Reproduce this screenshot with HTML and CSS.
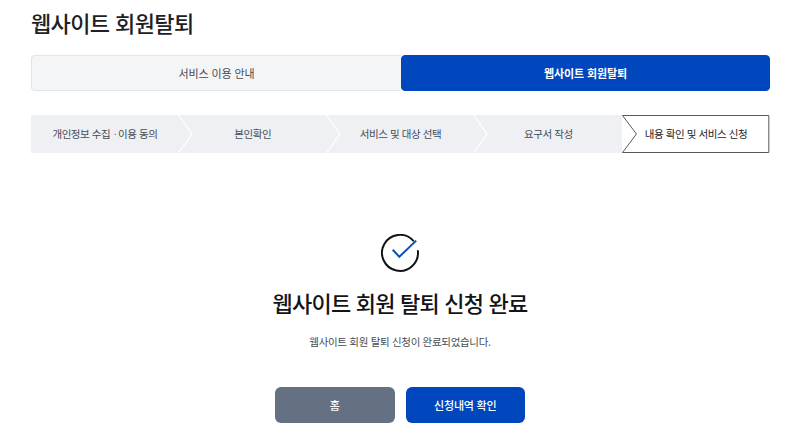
FILE: index.html
```html
<!DOCTYPE html>
<html lang="ko">
<head>
<meta charset="utf-8">
<title>웹사이트 회원탈퇴</title>
<link rel="stylesheet" href="styles.css">
</head>
<body>
<main class="page">
  <h1 class="title">웹사이트 회원탈퇴</h1>
  <div class="tabs">
    <a class="tab">서비스 이용 안내</a>
    <a class="tab tab-active">웹사이트 회원탈퇴</a>
  </div>
  <ol class="steps">
    <li class="step"><span>개인정보 수집<span class="step-dot">ㆍ</span>이용 동의</span><svg class="chevron" viewBox="0 0 15 38" aria-hidden="true"><path d="M0.5 0L14 19L0.5 38"/></svg></li>
    <li class="step">본인확인<svg class="chevron" viewBox="0 0 15 38" aria-hidden="true"><path d="M0.5 0L14 19L0.5 38"/></svg></li>
    <li class="step">서비스 및 대상 선택<svg class="chevron" viewBox="0 0 15 38" aria-hidden="true"><path d="M0.5 0L14 19L0.5 38"/></svg></li>
    <li class="step">요구서 작성</li>
    <li class="step step-current">
      <svg class="current-shape" viewBox="0 0 148 38" preserveAspectRatio="none" aria-hidden="true"><path d="M0.5 0.5H147V37.5H0.5L14.5 19Z"/></svg>
      <span class="step-label">내용 확인 및 서비스 신청</span>
    </li>
  </ol>
  <section class="done">
    <svg class="done-icon" viewBox="0 0 38 38" aria-hidden="true">
      <path class="ring" d="M32.2 6.6A18 18 0 1 0 36.9 17"/>
      <path class="tick" d="M11.7 15.7L18.3 22.8L35.2 6.6"/>
    </svg>
    <h2 class="done-title">웹사이트 회원 탈퇴 신청 완료</h2>
    <p class="done-text">웹사이트 회원 탈퇴 신청이 완료되었습니다.</p>
    <div class="actions">
      <a class="btn btn-gray">홈</a>
      <a class="btn btn-blue">신청내역 확인</a>
    </div>
  </section>
</main>
</body>
</html>
```
FILE: styles.css
```css
* { box-sizing: border-box; }
html, body { margin: 0; padding: 0; background: #fff; }
body {
  font-family: "Noto Sans CJK KR", "Noto Sans", sans-serif;
  color: #1e2124;
  overflow: hidden;
}
.page { width: 800px; height: 435px; padding: 0 30px 0 31px; }
.title {
  margin: 0;
  height: 55px;
  padding-top: 6px;
  font-size: 22px;
  line-height: 33px;
  font-weight: 500;
  letter-spacing: -0.028em;
  color: #1e2124;
}
.tabs { display: flex; height: 36px; }
.tab {
  flex: 1;
  display: flex;
  align-items: center;
  justify-content: center;
  font-size: 11px;
  letter-spacing: -0.01em;
  color: #464c53;
  background: #f4f5f6;
  border: 1px solid #e3e5e8;
  border-right: 0;
  border-radius: 4px 0 0 4px;
}
.tab-active {
  flex: 0 0 369px;
  background: #0047bd;
  border: 1px solid #0047bd;
  border-radius: 4px;
  color: #fff;
  font-weight: 700;
}
.steps {
  list-style: none;
  margin: 24px 0 0;
  padding: 0;
  display: grid;
  grid-template-columns: repeat(5, 1fr);
  height: 38px;
}
.step {
  position: relative;
  display: flex;
  align-items: center;
  justify-content: center;
  padding-bottom: 1px;
  background: #eef0f3;
  font-size: 10.5px;
  letter-spacing: -0.04em;
  color: #464c53;
}
.step-dot { letter-spacing: -0.2em; }
.chevron {
  position: absolute;
  z-index: 1;
  top: 0;
  left: 100%;
  width: 15px;
  height: 38px;
  margin-left: -1px;
  overflow: visible;
}
.chevron path { fill: #eef0f3; stroke: #fff; stroke-width: 1.2; }
.step-current { background: transparent; color: #1e2124; }
.current-shape { position: absolute; inset: 0; width: 100%; height: 100%; }
.current-shape path { fill: #fff; stroke: #55585c; stroke-width: 1; }
.step-label { position: relative; }
.done {
  display: flex;
  flex-direction: column;
  align-items: center;
  padding: 81px 1px 0 0;
}
.done-icon { width: 38px; height: 38px; display: block; }
.ring { fill: none; stroke: #131416; stroke-width: 2; stroke-linecap: round; }
.tick { fill: none; stroke: #0b50b5; stroke-width: 2; }
.done-title {
  margin: 14px 0 0;
  font-size: 22px;
  line-height: 33px;
  font-weight: 500;
  letter-spacing: -0.036em;
  color: #131416;
}
.done-text {
  margin: 15px 0 0;
  font-size: 10.5px;
  line-height: 16px;
  letter-spacing: -0.03em;
  color: #464c53;
}
.actions { display: flex; gap: 11px; margin-top: 37px; }
.btn {
  width: 119.5px;
  height: 36px;
  display: flex;
  align-items: center;
  justify-content: center;
  border-radius: 6px;
  font-size: 11px;
  font-weight: 500;
  letter-spacing: -0.02em;
  color: #fff;
}
.btn-gray { background: #667083; }
.btn-blue { background: #0047bd; }
```
